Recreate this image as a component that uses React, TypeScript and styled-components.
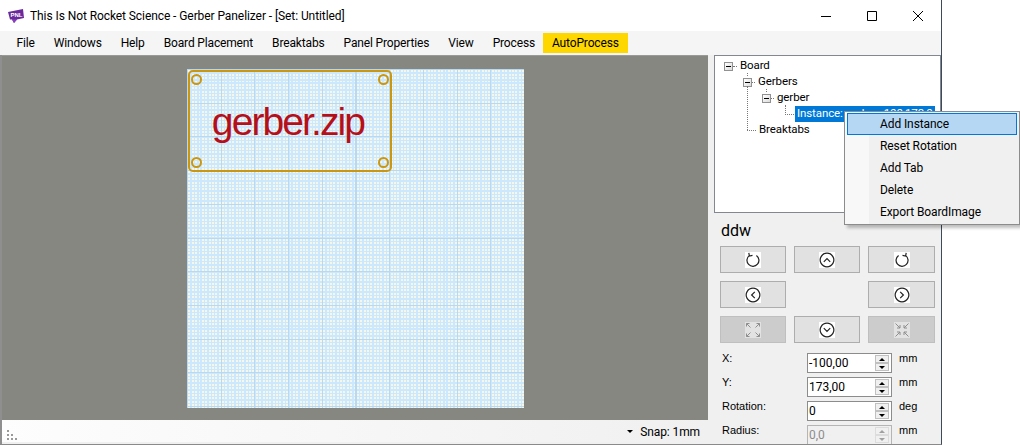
import React from 'react';
import styled, { createGlobalStyle } from 'styled-components';

const GlobalStyle = createGlobalStyle`
  html, body {
    margin: 0;
    padding: 0;
    background: #fff;
  }
`;

const Window = styled.div`
  position: relative;
  width: 942px;
  height: 445px;
  box-sizing: border-box;
  display: flex;
  flex-direction: column;
  background: #f0f0f0;
  border-right: 1px solid #3d4a5c;
  border-bottom: 1px solid #8a8a8a;
  font-family: 'Roboto', sans-serif;
  font-size: 12px;
  color: #000;
`;

const TitleBar = styled.div`
  height: 31px;
  flex: none;
  display: flex;
  align-items: center;
  background: #fff;
  padding-left: 8px;
`;

const TitleText = styled.span`
  margin-left: 6px;
  flex: 1;
  white-space: nowrap;
  letter-spacing: -0.08px;
`;

const WinControls = styled.div`
  display: flex;
  height: 100%;
`;

const WinButton = styled.div`
  width: 46px;
  display: flex;
  align-items: center;
  justify-content: center;
`;

const MenuBar = styled.div`
  height: 24px;
  flex: none;
  display: flex;
  align-items: center;
  padding-left: 7px;
  background: #f5f5f5;
`;

const MenuItem = styled.div<{ $highlight?: boolean }>`
  height: 20px;
  line-height: 20px;
  padding: 0 9.5px;
  white-space: nowrap;
  letter-spacing: -0.15px;
  margin-left: ${(p) => (p.$highlight ? '-2px' : '0')};
  background: ${(p) => (p.$highlight ? '#ffd700' : 'transparent')};
`;

const Body = styled.div`
  flex: 1;
  min-height: 0;
  display: flex;
`;

const LeftColumn = styled.div`
  width: 708px;
  flex: none;
  display: flex;
  flex-direction: column;
  border-left: 2px solid #8f8f8f;
  box-sizing: border-box;
`;

const Canvas = styled.div`
  flex: 1;
  min-height: 0;
  background: #878781;
  border-top: 1px solid #9a9a96;
  padding: 13px 0 0 185px;
`;

const Sheet = styled.div`
  position: relative;
  width: 337px;
  height: 339px;
  background-color: #f5f7ea;
  background-image:
    repeating-linear-gradient(to right, #b9d8f2 0 1px, transparent 1px 33.7px),
    repeating-linear-gradient(to bottom, #b9d8f2 0 1px, transparent 1px 33.7px),
    repeating-linear-gradient(to right, #cce8ff 0 1.4px, transparent 1.4px 3.37px),
    repeating-linear-gradient(to bottom, #cce8ff 0 1.4px, transparent 1.4px 3.37px);
`;

const Board = styled.div`
  position: absolute;
  left: 1px;
  top: 1px;
  width: 204px;
  height: 102px;
  box-sizing: border-box;
  padding-right: 4px;
  border: 2px solid #cb970f;
  border-radius: 5px;
  display: flex;
  align-items: center;
  justify-content: center;
`;

const BoardLabel = styled.span`
  font-family: 'Liberation Sans', Arial, sans-serif;
  font-size: 39px;
  letter-spacing: -1.9px;
  color: #b5101a;
  line-height: 1;
`;

const Hole = styled.i<{ $right?: boolean; $bottom?: boolean }>`
  position: absolute;
  ${(p) => (p.$right ? 'right: 1px;' : 'left: 1px;')}
  ${(p) => (p.$bottom ? 'bottom: 2px;' : 'top: 2px;')}
  width: 11px;
  height: 11px;
  box-sizing: border-box;
  border: 2px solid #cb970f;
  border-radius: 50%;
`;

const StatusBar = styled.div`
  height: 22px;
  flex: none;
  margin-bottom: 2px;
  padding: 1px 8px 0 0;
  box-sizing: border-box;
  display: flex;
  align-items: center;
  justify-content: flex-end;
  background: linear-gradient(to right, #fdfdfd, #f0f0f0);
  position: relative;
  letter-spacing: -0.1px;
`;

const Grip = styled.i`
  position: absolute;
  left: 5px;
  top: 10px;
  width: 2px;
  height: 2px;
  background: #999;
  box-shadow: 0 4px #999, 0 8px #999, 4px 4px #999, 4px 8px #999, 8px 8px #999;
`;

const SnapArrow = styled.span`
  width: 0;
  height: 0;
  border-left: 3px solid transparent;
  border-right: 3px solid transparent;
  border-top: 3px solid #000;
  margin-right: 7px;
`;

const SidePanel = styled.div`
  flex: 1;
  min-width: 0;
  display: flex;
  flex-direction: column;
  font-family: 'Liberation Sans', Arial, sans-serif;
  background: #f0f0f0;
  overflow: hidden;
`;

const TreeBox = styled.div`
  height: 158px;
  flex: none;
  margin-left: 6px;
  box-sizing: border-box;
  background: #fff;
  border: 1px solid #828790;
  padding: 2px 0 0 9px;
  font-family: 'Roboto', sans-serif;
  font-size: 11.5px;
  letter-spacing: -0.1px;
`;

const TreeRow = styled.div<{ $level: number }>`
  position: relative;
  height: 16px;
  display: flex;
  align-items: center;
  padding-left: ${(p) => p.$level * 19}px;
`;

const Expander = styled.span`
  width: 9px;
  height: 9px;
  flex: none;
  box-sizing: border-box;
  border: 1px solid #919191;
  background: linear-gradient(135deg, #fff, #dcdcdc);
  display: flex;
  align-items: center;
  justify-content: center;

  &::before {
    content: '';
    width: 5px;
    height: 1px;
    background: #000;
  }
`;

const Dots = styled.span<{ $width: number; $indent?: number }>`
  width: ${(p) => p.$width}px;
  flex: none;
  border-top: 1px dotted #777;
  margin: 0 1px 0 ${(p) => p.$indent ?? 0}px;
`;

const VDots = styled.span<{ $left: number; $top: number; $height: number }>`
  position: absolute;
  left: ${(p) => p.$left}px;
  top: ${(p) => p.$top}px;
  height: ${(p) => p.$height}px;
  border-left: 1px dotted #777;
`;

const NodeLabel = styled.span<{ $selected?: boolean }>`
  white-space: pre;
  height: 16px;
  line-height: 15px;
  padding: 0 2px;
  background: ${(p) => (p.$selected ? '#0078d7' : 'transparent')};
  color: ${(p) => (p.$selected ? '#fff' : '#000')};
`;

const PanelBody = styled.div`
  flex: 1;
  padding: 7px 6px 0 12px;
`;

const PanelTitle = styled.div`
  font-family: 'Roboto', sans-serif;
  font-size: 16px;
  line-height: 22px;
  margin-left: 1px;
  height: 26px;
`;

const ButtonGrid = styled.div`
  display: grid;
  grid-template-columns: 66px 66px 67px;
  grid-auto-rows: 27px;
  gap: 8px;
`;

const MoveButton = styled.div<{ $off?: boolean }>`
  box-sizing: border-box;
  display: flex;
  align-items: center;
  justify-content: center;
  background: ${(p) => (p.$off ? '#cccccc' : '#e1e1e1')};
  border: 1px solid ${(p) => (p.$off ? '#bfbfbf' : '#adadad')};
`;

const IconTile = styled.span<{ $off?: boolean }>`
  width: 16px;
  height: 16px;
  display: block;
  background: ${(p) => (p.$off ? '#e2e2e2' : '#fff')};
`;

const Fields = styled.div`
  margin-top: 10px;
  display: flex;
  flex-direction: column;
  gap: 4px;
`;

const FieldRow = styled.div`
  height: 20px;
  display: grid;
  grid-template-columns: 80px 85px auto;
  column-gap: 7px;
`;

const FieldLabel = styled.span`
  padding-left: 2px;
  font-size: 11px;
  line-height: 10px;
`;

const Spin = styled.div<{ $off?: boolean }>`
  box-sizing: border-box;
  height: 20px;
  display: flex;
  background: ${(p) => (p.$off ? '#f0f0f0' : '#fff')};
  border: 1px solid ${(p) => (p.$off ? '#b5b5b5' : '#8c8c8c')};
  color: ${(p) => (p.$off ? '#8c8c8c' : '#000')};
`;

const SpinValue = styled.span`
  flex: 1;
  font-family: 'Roboto', sans-serif;
  font-size: 12px;
  line-height: 18px;
  padding-left: 1px;
`;

const SpinButtons = styled.div`
  width: 14px;
  margin: 1px 2px 1px 0;
  display: flex;
  flex-direction: column;
`;

const SpinArrow = styled.span<{ $down?: boolean; $off?: boolean }>`
  flex: 1;
  background: #f0f0f0;
  border: 1px solid ${(p) => (p.$off ? '#dcdcdc' : '#c0c0c0')};
  position: relative;

  &::after {
    content: '';
    position: absolute;
    left: 3px;
    top: 2px;
    border-left: 3px solid transparent;
    border-right: 3px solid transparent;
    ${(p) => (p.$down ? 'border-top' : 'border-bottom')}: 3px solid ${(p) => (p.$off ? '#a0a0a0' : '#000')};
  }
`;

const Unit = styled.span`
  line-height: 10px;
  font-size: 11px;
`;

const ContextMenu = styled.div`
  position: absolute;
  left: 844px;
  top: 111px;
  width: 176px;
  height: 114px;
  box-sizing: border-box;
  padding: 1px 2px;
  background: linear-gradient(to right, #f8f8f8 24px, #f0f0f0 24px);
  border: 1px solid #8c8c8c;
  box-shadow: 3px 3px 3px rgba(0, 0, 0, 0.25);
  font-family: 'Roboto', sans-serif;
  font-size: 12px;
  letter-spacing: -0.1px;
`;

const ContextItem = styled.div<{ $active?: boolean }>`
  height: 22px;
  box-sizing: border-box;
  padding-left: 32px;
  line-height: 21px;
  border: 1px solid ${(p) => (p.$active ? '#0078d7' : 'transparent')};
  background: ${(p) => (p.$active ? '#b5d7f3' : 'transparent')};
`;

const LogoText = styled.text`
  font-family: 'Liberation Sans', Arial, sans-serif;
  font-size: 6px;
  font-weight: 700;
  fill: #fff;
`;

const Logo = () => (
  <svg width="16" height="14" viewBox="0 0 16 14">
    <path d="M0 3 L15 0 L16 9 L9 10.500 L6 14 L4 10.500 L2 10.500 Z" fill="#6a2a9c" />
    <path d="M9 10.500 L6 14 L4 10.500 Z" fill="#8a3fc0" />
    <LogoText x="2.500" y="8">PNL</LogoText>
  </svg>
);

const WinIcon = ({ d }: { d: string }) => (
  <svg width="12" height="12" viewBox="0 0 12 12">
    <path d={d} fill="none" stroke="#000" strokeWidth="1" />
  </svg>
);

const Glyph = ({ d, dim }: { d: string; dim?: boolean }) => (
  <IconTile $off={dim}>
    <svg width="16" height="16" viewBox="0 0 16 16">
      <path d={d} fill="none" stroke={dim ? '#8e8e8e' : '#222'} strokeWidth={dim ? 1 : 1.2} />
    </svg>
  </IconTile>
);

const circle = 'M8 1.200a6.800 6.800 0 1 0 .01 0';
const icons = {
  cw: 'M4.200 3.600a6 6 0 1 0 7.200 -.2M3.800 .8l.6 3.200 3.100-.6',
  up: circle + 'M4.800 9.800l3.200-3.200 3.200 3.200',
  ccw: 'M11.800 3.600a6 6 0 1 1 -7.200 -.2M12.200 .8l-.6 3.200-3.100-.6',
  left: circle + 'M9.800 4.800l-3.200 3.200 3.200 3.200',
  right: circle + 'M6.200 4.800l3.200 3.200-3.200 3.200',
  down: circle + 'M4.800 6.200l3.200 3.200 3.200-3.200',
  expand: 'M5.500 5.500L1.500 1.500M1.500 4.500v-3h3M10.500 5.500l4-4M11.500 1.500h3v3M5.500 10.500l-4 4M1.500 11.500v3h3M10.500 10.500l4 4M14.500 11.500v3h-3',
  shrink: 'M1.500 1.500L6 6M3 6h3V3M14.500 1.500L10 6M13 6h-3V3M1.500 14.500L6 10M3 10h3v3M14.500 14.500L10 10M13 10h-3v3',
};

const fields = [
  { label: 'X:', value: '-100,00', unit: 'mm' },
  { label: 'Y:', value: '173,00', unit: 'mm' },
  { label: 'Rotation:', value: '0', unit: 'deg' },
  { label: 'Radius:', value: '0,0', unit: 'mm', off: true },
];

const App: React.FC = () => (
  <>
    <GlobalStyle />
    <Window>
      <TitleBar>
        <Logo />
        <TitleText>This Is Not Rocket Science - Gerber Panelizer - [Set: Untitled]</TitleText>
        <WinControls>
          <WinButton><WinIcon d="M1 6.500h10" /></WinButton>
          <WinButton><WinIcon d="M1.500 1.500h9v9h-9z" /></WinButton>
          <WinButton><WinIcon d="M1 1l10 10M11 1L1 11" /></WinButton>
        </WinControls>
      </TitleBar>
      <MenuBar>
        {['File', 'Windows', 'Help', 'Board Placement', 'Breaktabs', 'Panel Properties', 'View', 'Process'].map((m) => (
          <MenuItem key={m}>{m}</MenuItem>
        ))}
        <MenuItem $highlight>AutoProcess</MenuItem>
      </MenuBar>
      <Body>
        <LeftColumn>
          <Canvas>
            <Sheet>
              <Board>
                <Hole />
                <Hole $right />
                <Hole $bottom />
                <Hole $right $bottom />
                <BoardLabel>gerber.zip</BoardLabel>
              </Board>
            </Sheet>
          </Canvas>
          <StatusBar>
            <Grip />
            <SnapArrow />
            Snap: 1mm
          </StatusBar>
        </LeftColumn>
        <SidePanel>
          <TreeBox>
            <TreeRow $level={0}>
              <Expander />
              <Dots $width={4} />
              <NodeLabel>Board</NodeLabel>
            </TreeRow>
            <TreeRow $level={1}>
              <VDots $left={23} $top={-1} $height={3} />
              <VDots $left={23} $top={12} $height={44} />
              <Expander />
              <Dots $width={3} />
              <NodeLabel>Gerbers</NodeLabel>
            </TreeRow>
            <TreeRow $level={2}>
              <VDots $left={42} $top={-1} $height={3} />
              <Expander />
              <Dots $width={3} />
              <NodeLabel>gerber</NodeLabel>
            </TreeRow>
            <TreeRow $level={3}>
              <VDots $left={61} $top={-1} $height={8} />
              <Dots $width={9} $indent={4} />
              <NodeLabel $selected>Instance: gerber -100,173,0</NodeLabel>
            </TreeRow>
            <TreeRow $level={1}>
              <Dots $width={9} $indent={4} />
              <NodeLabel>Breaktabs</NodeLabel>
            </TreeRow>
          </TreeBox>
          <PanelBody>
            <PanelTitle>ddw</PanelTitle>
            <ButtonGrid>
              <MoveButton><Glyph d={icons.cw} /></MoveButton>
              <MoveButton><Glyph d={icons.up} /></MoveButton>
              <MoveButton><Glyph d={icons.ccw} /></MoveButton>
              <MoveButton><Glyph d={icons.left} /></MoveButton>
              <span />
              <MoveButton><Glyph d={icons.right} /></MoveButton>
              <MoveButton $off><Glyph d={icons.expand} dim /></MoveButton>
              <MoveButton><Glyph d={icons.down} /></MoveButton>
              <MoveButton $off><Glyph d={icons.shrink} dim /></MoveButton>
            </ButtonGrid>
            <Fields>
              {fields.map((f) => (
                <FieldRow key={f.label}>
                  <FieldLabel>{f.label}</FieldLabel>
                  <Spin $off={f.off}>
                    <SpinValue>{f.value}</SpinValue>
                    <SpinButtons>
                      <SpinArrow $off={f.off} />
                      <SpinArrow $down $off={f.off} />
                    </SpinButtons>
                  </Spin>
                  <Unit>{f.unit}</Unit>
                </FieldRow>
              ))}
            </Fields>
          </PanelBody>
        </SidePanel>
      </Body>
      <ContextMenu>
        <ContextItem $active>Add Instance</ContextItem>
        <ContextItem>Reset Rotation</ContextItem>
        <ContextItem>Add Tab</ContextItem>
        <ContextItem>Delete</ContextItem>
        <ContextItem>Export BoardImage</ContextItem>
      </ContextMenu>
    </Window>
  </>
);

export default App;
